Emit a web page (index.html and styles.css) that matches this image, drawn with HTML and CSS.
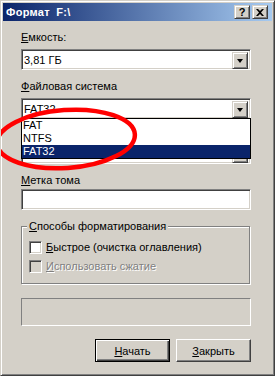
FILE: index.html
```html
<!DOCTYPE html>
<html lang="ru">
<head>
<meta charset="UTF-8">
<title>Формат F:\</title>
<link rel="stylesheet" href="styles.css">
</head>
<body>
  <div class="window">
    <div class="titlebar">
      <span class="title">Формат F:\</span>
      <div class="caption-buttons">
        <span class="cap-btn help">?</span>
        <span class="cap-btn close">
          <svg width="8" height="7" viewBox="0 0 8 7"><path d="M0 0h2l2 2 2-2h2L5 3.5 8 7H6L4 5 2 7H0l3-3.5z" fill="#000"/></svg>
        </span>
      </div>
    </div>

    <div class="content">
      <div class="label first"><u>Е</u>мкость:</div>
      <div class="combo">
        <span class="combo-text">3,81 ГБ</span>
        <span class="drop-btn"></span>
      </div>

      <div class="label"><u>Ф</u>айловая система</div>
      <div class="combo-wrap">
        <div class="combo">
          <span class="combo-text">FAT32</span>
          <span class="drop-btn"></span>
        </div>
        <ul class="droplist">
          <li>FAT</li>
          <li>NTFS</li>
          <li class="selected">FAT32</li>
        </ul>
      </div>

      <!-- label of the cluster combo is covered by the open list -->
      <div class="label cluster"></div>
      <div class="combo">
        <span class="combo-text under">Стандартный размер кластера</span>
        <span class="drop-btn"></span>
      </div>

      <div class="label"><u>М</u>етка тома</div>
      <div class="field"></div>

      <fieldset class="group">
        <legend><u>С</u>пособы форматирования</legend>
        <div class="check"><span class="box"></span><span><u>Б</u>ыстрое (очистка оглавления)</span></div>
        <div class="check disabled"><span class="box"></span><span><u>И</u>спользовать сжатие</span></div>
      </fieldset>

      <div class="progress"></div>

      <div class="buttons">
        <button class="btn default"><u>Н</u>ачать</button>
        <button class="btn"><u>З</u>акрыть</button>
      </div>
    </div>

    <!-- red marker drawn over the dropdown -->
    <svg class="marker" width="275" height="376" viewBox="0 0 275 376">
      <ellipse cx="66" cy="139" rx="69" ry="29" transform="rotate(-4 66 139)" fill="none" stroke="#f00" stroke-width="4.5"/>
    </svg>
  </div>
</body>
</html>
```

FILE: styles.css
```css
body {
  margin: 0;
}

.window {
  position: relative;
  width: 275px;
  height: 376px;
  box-sizing: border-box;
  padding: 2px;
  background: #d4d0c8;
  border: 1px solid;
  border-color: #d4d0c8 #404040 #404040 #d4d0c8;
  box-shadow: inset 1px 1px #fff, inset -1px -1px #808080;
  font: 11px "Liberation Sans", Arial, sans-serif;
  color: #000;
  overflow: hidden;
}

/* title bar */
.titlebar {
  height: 18px;
  display: flex;
  align-items: center;
  justify-content: space-between;
  padding-left: 3px;
  background: linear-gradient(to right, #0a246a, #a6caf0);
}

.title {
  color: #fff;
  font-weight: bold;
  word-spacing: 3px;
  letter-spacing: 0.3px;
}

.caption-buttons {
  display: flex;
  gap: 2px;
  margin-right: 4px;
}

.cap-btn {
  width: 16px;
  height: 14px;
  box-sizing: border-box;
  display: flex;
  align-items: center;
  justify-content: center;
  background: #d4d0c8;
  border: 1px solid;
  border-color: #d4d0c8 #404040 #404040 #d4d0c8;
  box-shadow: inset 1px 1px #fff, inset -1px -1px #808080;
  font-weight: bold;
  font-size: 11px;
  line-height: 12px;
}

.cap-btn svg {
  display: block;
}

/* dialog body */
.content {
  padding: 0 21px 0 18px;
}

.label {
  line-height: 13px;
  min-height: 13px;
  margin-top: 10px;
  margin-bottom: 5px;
}

.label.cluster {
  margin-top: 6px;
}

.combo,
.field {
  height: 21px;
  box-sizing: border-box;
  background: #fff;
  border: 1px solid;
  border-color: #808080 #fff #fff #808080;
  box-shadow: inset 1px 1px #404040, inset -1px -1px #d4d0c8;
}

.combo {
  display: flex;
  padding: 2px;
}

.combo-text {
  flex: 1;
  line-height: 13px;
  padding-top: 2px;
  white-space: nowrap;
  overflow: hidden;
}

.combo-text.under {
  padding-top: 0;
}

.drop-btn {
  width: 16px;
  height: 17px;
  box-sizing: border-box;
  display: flex;
  align-items: center;
  justify-content: center;
  background: #d4d0c8;
  border: 1px solid;
  border-color: #d4d0c8 #404040 #404040 #d4d0c8;
  box-shadow: inset 1px 1px #fff, inset -1px -1px #808080;
}

.drop-btn::after {
  content: "";
  border-left: 3.5px solid transparent;
  border-right: 3.5px solid transparent;
  border-top: 4px solid #000;
  margin-top: 1px;
}

.combo-wrap {
  position: relative;
}

.droplist {
  position: absolute;
  top: 20px;
  left: 0;
  right: 0;
  z-index: 2;
  margin: 0;
  padding: 0;
  list-style: none;
  background: #fff;
  border: 1px solid #000;
}

.droplist li {
  line-height: 13px;
  padding-left: 1px;
}

.droplist li.selected {
  background: #0a246a;
  color: #fff;
}

.field {
  margin-top: -3px;
}

/* group box */
.group {
  margin: 10px 0 0;
  padding: 8px 0 9px 7px;
  min-inline-size: 0;
  border: 1px solid #808080;
  box-shadow: inset 1px 1px #fff, 1px 1px 0 #fff;
  width: 229px;
  height: 64px;
  box-sizing: border-box;
}

.group legend {
  padding: 0 2px;
  margin-left: -2px;
  line-height: 13px;
  background: #d4d0c8;
}

.check {
  display: flex;
  align-items: center;
  gap: 4px;
  height: 13px;
  line-height: 13px;
}

.check + .check {
  margin-top: 6px;
}

.box {
  width: 13px;
  height: 13px;
  box-sizing: border-box;
  background: #fff;
  border: 1px solid;
  border-color: #808080 #fff #fff #808080;
  box-shadow: inset 1px 1px #404040, inset -1px -1px #d4d0c8;
}

.check.disabled {
  color: #808080;
  text-shadow: 1px 1px #fff;
}

.check.disabled .box {
  background: #d4d0c8;
}

/* progress area */
.progress {
  height: 28px;
  box-sizing: border-box;
  margin-top: 14px;
  border: 1px solid;
  border-color: #808080 #fff #fff #808080;
}

/* buttons */
.buttons {
  display: flex;
  justify-content: flex-end;
  gap: 6px;
  margin-top: 13px;
}

.btn {
  width: 75px;
  height: 23px;
  box-sizing: border-box;
  padding: 0;
  font: inherit;
  color: #000;
  background: #d4d0c8;
  border: 1px solid;
  border-color: #fff #404040 #404040 #fff;
  box-shadow: inset -1px -1px #808080;
}

.btn.default {
  border-color: #000;
  box-shadow: inset 1px 1px #fff, inset -1px -1px #404040, inset -2px -2px #808080;
}

.marker {
  position: absolute;
  top: -1px;
  left: -1px;
  z-index: 3;
  pointer-events: none;
}
```
